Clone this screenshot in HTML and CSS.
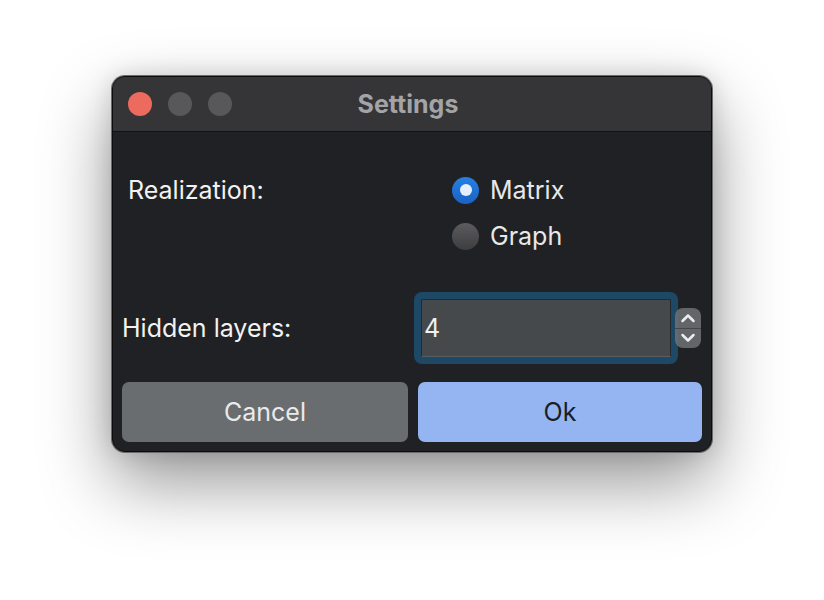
FILE: index.html
```html
<!DOCTYPE html>
<html>
<head>
<meta charset="utf-8">
<link rel="stylesheet" href="styles.css">
</head>
<body>
<div class="window">
  <div class="titlebar">
    <div class="lights">
      <span class="light red"></span>
      <span class="light grey"></span>
      <span class="light grey"></span>
    </div>
    <div class="title">Settings</div>
  </div>
  <div class="content">
    <div class="realization">
      <div class="label rlabel">Realization:</div>
      <div class="radios">
        <div class="radio-row"><span class="radio on"></span><span class="rtext">Matrix</span></div>
        <div class="radio-row"><span class="radio off"></span><span class="rtext">Graph</span></div>
      </div>
    </div>
    <div class="hidden-row">
      <div class="label">Hidden layers:</div>
      <div class="spin">
        <div class="ring"><div class="field">4</div></div>
        <div class="stepper">
          <div class="step">
            <svg width="16" height="10" viewBox="0 0 16 10"><path d="M2.5 8 L8 2.5 L13.5 8" fill="none" stroke="#ececec" stroke-width="2.5" stroke-linecap="round" stroke-linejoin="round"/></svg>
          </div>
          <div class="step">
            <svg width="16" height="10" viewBox="0 0 16 10"><path d="M2.5 2 L8 7.5 L13.5 2" fill="none" stroke="#ececec" stroke-width="2.5" stroke-linecap="round" stroke-linejoin="round"/></svg>
          </div>
        </div>
      </div>
    </div>
    <div class="buttons">
      <div class="btn cancel">Cancel</div>
      <div class="btn ok">Ok</div>
    </div>
  </div>
</div>
</body>
</html>
```
FILE: styles.css
```css
html, body {
  margin: 0;
  padding: 0;
  background: #ffffff;
}
body {
  width: 824px;
  height: 600px;
  overflow: hidden;
  font-family: Inter, "Liberation Sans", sans-serif;
  padding-top: 76px;
  box-sizing: border-box;
}
.window {
  margin-left: 112px;
  width: 600px;
  height: 376px;
  box-sizing: border-box;
  border-radius: 13px;
  background: #202124;
  border: 1px solid #0c0c0d;
  box-shadow: 0 0 0 1px #6a6a6a, 0 30px 70px rgba(0,0,0,0.42), 0 0 24px rgba(0,0,0,0.15);
  overflow: hidden;
  display: flex;
  flex-direction: column;
}
.titlebar {
  height: 54px;
  flex: none;
  background: #353538;
  border-bottom: 1px solid #111113;
  display: flex;
  align-items: center;
  position: relative;
}
.lights {
  display: flex;
  gap: 16px;
  padding-left: 15px;
}
.light {
  width: 24px;
  height: 24px;
  border-radius: 50%;
  display: block;
}
.light.red { background: #ec6a5e; }
.light.grey { background: #58585b; }
.title {
  position: absolute;
  left: 0;
  right: 0;
  top: 0;
  bottom: 0;
  display: flex;
  align-items: center;
  justify-content: center;
  color: #a4a4a6;
  font-weight: 700;
  font-size: 25px;
  padding-right: 8px;
}
.content {
  flex: 1;
  padding: 10px 9px 9px 9px;
  display: flex;
  flex-direction: column;
}
.label {
  color: #f2f2f2;
  font-size: 25px;
}
.realization {
  display: flex;
  margin-top: 25px;
}
.rlabel {
  width: 324px;
  padding-left: 6px;
  height: 46px;
  line-height: 46px;
}
.radios {
  display: flex;
  flex-direction: column;
}
.radio-row {
  height: 46px;
  display: flex;
  align-items: center;
  gap: 11px;
}
.radio {
  width: 27px;
  height: 27px;
  border-radius: 50%;
  box-sizing: border-box;
  display: flex;
  align-items: center;
  justify-content: center;
}
.radio.on {
  background: linear-gradient(#2580e2, #1a62c6);
}
.radio.on::after {
  content: "";
  width: 12px;
  height: 12px;
  border-radius: 50%;
  background: #e6f0fc;
}
.radio.off {
  background: linear-gradient(#5c5c5e, #3d3d3f);
}
.rtext {
  color: #e8e8e8;
  font-size: 25px;
}
.hidden-row {
  display: flex;
  align-items: center;
  justify-content: space-between;
  margin-top: 33px;
}
.spin {
  display: flex;
  align-items: center;
  margin-right: 1px;
}
.ring {
  width: 264px;
  height: 72px;
  box-sizing: border-box;
  border-radius: 8px;
  background: #1d4866;
  padding: 7px;
}
.field {
  height: 100%;
  box-sizing: border-box;
  background: #46494c;
  border: 1px solid #26282a;
  border-bottom-color: #5a5d60;
  color: #f0f0f0;
  font-size: 25px;
  display: flex;
  align-items: center;
  padding-left: 2px;
}
.stepper {
  width: 26px;
  height: 40px;
  margin-left: -3px;
  border-radius: 8px;
  background: rgba(110,114,118,0.85);
  display: flex;
  flex-direction: column;
  overflow: hidden;
}
.step {
  flex: 1;
  display: flex;
  align-items: center;
  justify-content: center;
}
.step + .step {
  border-top: 1px solid #45484b;
}
.buttons {
  display: grid;
  grid-template-columns: 286px 284px;
  gap: 10px;
  margin-top: 18px;
}
.btn {
  height: 60px;
  border-radius: 7px;
  display: flex;
  align-items: center;
  justify-content: center;
  font-size: 25px;
}
.cancel {
  background: #6a6d70;
  color: #eaeaea;
}
.ok {
  background: #94b5f1;
  color: #1c1d20;
}
```
